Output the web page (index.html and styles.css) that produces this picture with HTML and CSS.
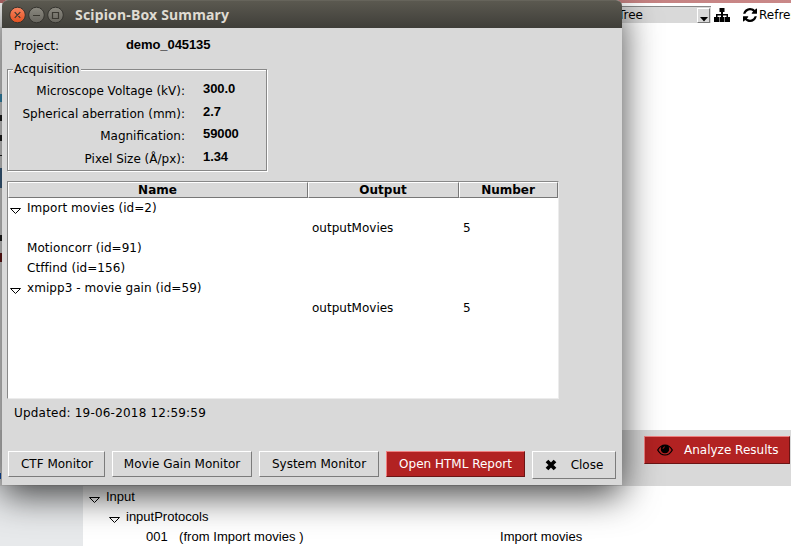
FILE: index.html
```html
<!DOCTYPE html>
<html lang="en">
<head>
<meta charset="utf-8">
<title>Scipion-Box Summary</title>
<link rel="stylesheet" href="styles.css">
</head>
<body>
<main class="app">
  <div class="app-top"></div>
  <header class="toolbar">
    <div class="combo"><span>Tree</span><i class="combo-btn"><svg width="8" height="5"><path d="M0 0h8L4 4.500z"/></svg></i></div>
    <svg class="ic-tree" width="16" height="14" viewBox="0 0 16 14"><path d="M5.500 0h5v4H9v2h5v3h2v5h-5V9h1.500V7.500H9V9h1.500v5h-5V9H7V7.500H3.500V9H5v5H0V9h2V6h5V4H5.500z"/></svg>
    <svg class="ic-refresh" width="14" height="14" viewBox="0 0 1536 1536"><path d="M1511 928q0 5-1 7-64 268-268 434.500T764 1536q-146 0-282.500-55T238 1324l-129 129q-19 19-45 19t-45-19-19-45V960q0-26 19-45t45-19h448q26 0 45 19t19 45-19 45l-137 137q71 66 161 102t187 36q134 0 250-65t186-179q11-17 53-117 8-23 30-23h192q13 0 22.500 9.500t9.500 22.500zM1536 128v448q0 26-19 45t-45 19h-448q-26 0-45-19t-19-45 19-45l138-138Q969 256 768 256q-134 0-250 65T332 500q-11 17-53 117-8 23-30 23H50q-13 0-22.500-9.500T18 608v-7q65-268 270-434.500T768 0q146 0 284 55.500T1297 212l130-129q19-19 45-19t45 19 19 45z"/></svg>
    <span class="refresh">Refresh</span>
  </header>
  <section class="canvas"></section>
  <div class="actions">
    <button class="btn red analyze"><svg width="16" height="12" viewBox="0 0 16 12"><path fill-rule="evenodd" d="M0 6Q3 .4 8 .4T16 6Q13 11.600 8 11.600T0 6zM1.400 6Q4 10.500 8 10.500T14.600 6Q13.400 3.600 11.300 2.400Q12.200 3.500 12.200 5A4.200 4.200 0 0 1 3.800 5Q3.800 3.500 4.700 2.400Q2.600 3.600 1.400 6z"/><circle cx="8" cy="5" r="3.900"/><path d="M6 5Q6 3 8 2.800" fill="none" stroke="#b22222" stroke-width=".8"/></svg><span>Analyze Results</span></button>
  </div>
  <section class="details">
    <aside class="side"></aside>
    <div class="params">
      <div class="p-row"><svg class="tri" width="11" height="7"><path d="M.5 .5h10l-5 5z"/></svg><span>Input</span></div>
      <div class="p-row p-child"><svg class="tri" width="11" height="7"><path d="M.5 .5h10l-5 5z"/></svg><span>inputProtocols</span></div>
      <div class="p-row p-leaf"><span class="idx">001</span><span class="from">(from Import movies )</span><span>Import movies</span></div>
    </div>
  </section>
</main>

<div class="window">
  <header class="titlebar">
    <svg width="62" height="18" viewBox="0 0 62 18">
      <defs><linearGradient id="o" x2="0" y2="1"><stop stop-color="#f78460"/><stop offset="1" stop-color="#e2501f"/></linearGradient><linearGradient id="g" x2="0" y2="1"><stop stop-color="#8b8980"/><stop offset="1" stop-color="#67655e"/></linearGradient></defs>
      <g stroke="#34332e"><circle cx="9.500" cy="9" r="7.800" fill="url(#o)"/><circle cx="28.500" cy="9" r="7.800" fill="url(#g)"/><circle cx="47.500" cy="9" r="7.800" fill="url(#g)"/></g>
      <path d="M6.700 6.200l5.600 5.600m0-5.600l-5.600 5.600M25 9.500h7M44.500 6.500h6v6h-6z" fill="none" stroke="#3a3831" stroke-width="1.200"/>
    </svg>
    <h1>Scipion-Box Summary</h1>
  </header>
  <div class="project"><span>Project:</span><b>demo_045135</b></div>
  <fieldset class="acq">
    <legend>Acquisition</legend>
    <div class="field"><span>Microscope Voltage (kV):</span><b>300.0</b></div>
    <div class="field"><span>Spherical aberration (mm):</span><b>2.7</b></div>
    <div class="field"><span>Magnification:</span><b>59000</b></div>
    <div class="field"><span>Pixel Size (Å/px):</span><b>1.34</b></div>
  </fieldset>
  <div class="tree">
    <div class="row head"><span>Name</span><span>Output</span><span>Number</span></div>
    <div class="row"><span class="name"><svg class="tri" width="11" height="7"><path d="M.5 .5h10l-5 5z"/></svg>Import movies (id=2)</span></div>
    <div class="row"><span></span><span>outputMovies</span><span>5</span></div>
    <div class="row"><span class="name plain">Motioncorr (id=91)</span></div>
    <div class="row"><span class="name plain">Ctffind (id=156)</span></div>
    <div class="row"><span class="name"><svg class="tri" width="11" height="7"><path d="M.5 .5h10l-5 5z"/></svg>xmipp3 - movie gain (id=59)</span></div>
    <div class="row"><span></span><span>outputMovies</span><span>5</span></div>
  </div>
  <p class="updated">Updated: 19-06-2018 12:59:59</p>
  <div class="buttons">
    <button class="btn ctf">CTF Monitor</button>
    <button class="btn gain">Movie Gain Monitor</button>
    <button class="btn sys">System Monitor</button>
    <button class="btn red report">Open HTML Report</button>
    <button class="btn close"><svg width="12" height="12" viewBox="0 0 12 12"><path d="M2 2l8 8M10 2l-8 8" stroke="#000" stroke-width="3.800"/></svg><span>Close</span></button>
  </div>
</div>
</body>
</html>
```
FILE: styles.css
```css
* { box-sizing: border-box; }
body {
  margin: 0;
  width: 791px;
  height: 546px;
  overflow: hidden;
  position: relative;
  background: #fff;
  color: #000;
  font: 12px/20px "DejaVu Sans", sans-serif;
}
span, b, h1, legend, button, p { white-space: nowrap; }
svg { display: block; flex: none; }

.app { display: flex; flex-direction: column; height: 546px; }
.app-top { height: 3px; background: linear-gradient(90deg, #b36868, #c98888); flex: none; }
.toolbar { display: flex; height: 24px; padding: 3px 0 0 600px; flex: none; }
.combo {
  width: 111px;
  height: 17px;
  flex: none;
  display: flex;
  justify-content: space-between;
  padding-left: 18px;
  background: #d9d9d9;
  border-top: 1px solid #888;
  line-height: 16px;
}
.combo-btn {
  width: 13px;
  height: 15px;
  margin-top: 1px;
  margin-right: 1px;
  padding: 8px 0 0 2px;
  border: 1px solid;
  border-color: #fff #777 #777 #fff;
}
.ic-tree { margin: 2px 0 0 3px; }
.ic-refresh { margin: 2px 2px 0 13px; }
.refresh { line-height: 18px; }
/* The left sliver shows the edge of the protocol tree behind the window. */
.canvas {
  height: 403px;
  flex: none;
  background:
    linear-gradient(#3d9cc8, #3d9cc8) 0 67px / 2px 8px no-repeat,
    linear-gradient(#222, #222) 0 88px / 2px 6px no-repeat,
    linear-gradient(#222, #222) 0 108px / 2px 6px no-repeat,
    linear-gradient(#222, #222) 0 128px / 2px 1px no-repeat,
    linear-gradient(#3f6890, #3f6890) 0 141px / 2px 20px no-repeat,
    linear-gradient(#222, #222) 0 208px / 2px 6px no-repeat,
    linear-gradient(#701818, #701818) 0 226px / 2px 9px no-repeat,
    linear-gradient(#e8e8e8, #e8e8e8) 0 0 / 2px 100% no-repeat,
    #fff;
}
.actions {
  height: 56px;
  flex: none;
  padding: 6px 0 0 644px;
  background: linear-gradient(#1050b0, #1050b0) 0 43px / 1px 6px no-repeat #d9d9d9;
}
.details { display: flex; flex: 1; }
.side { width: 83px; background: #e7e9eb; }
.params { flex: 1; font: 13px/20px "Liberation Sans", sans-serif; padding-top: 1px; }
.p-row { display: flex; height: 20px; padding-left: 6px; }
.p-row .tri { margin: 10px 6px 0 0; }
.p-child { padding-left: 26px; }
.p-leaf { padding-left: 63px; letter-spacing: .05px; }
.idx { width: 33px; }
.from { width: 321px; }
.tri { fill: #fff; stroke: #000; stroke-width: 1; }

.window {
  position: absolute;
  left: 2px;
  top: 0;
  width: 620px;
  height: 485px;
  display: flex;
  flex-direction: column;
  background: #d9d9d9;
  border-radius: 6px 6px 0 0;
  box-shadow: 0 10px 36px rgba(0, 0, 0, .74);
}
.titlebar {
  height: 28px;
  flex: none;
  display: flex;
  align-items: center;
  gap: 5px;
  padding-left: 6px;
  border-radius: 6px 6px 0 0;
  background: linear-gradient(#5b5950, #3f3e39);
  border-top: 1px solid #66645b;
}
.titlebar h1 { margin: 0; color: #dfdbd2; font: bold 14px/26px "Noto Sans", sans-serif; letter-spacing: .18px; padding-top: 1px; }
.project { display: flex; height: 36px; padding: 9px 0 0 12px; }
.project span { width: 112px; line-height: 19px; }
b { font: bold 13px/16px "Liberation Sans", sans-serif; letter-spacing: -.08px; }
.acq {
  margin: 0 0 0 5px;
  width: 260px;
  height: 107px;
  padding: 0;
  border: 1px solid #888;
  box-shadow: inset 1px 1px #fff, 1px 1px #fff;
}
.acq legend { padding: 0 1px; margin: 0 0 5px 5px; height: 10px; line-height: 10px; background: #d9d9d9; }
.field { display: flex; height: 22.700px; gap: 18px; }
.field span { width: 177px; text-align: right; line-height: 24px; }
.field b { line-height: 20px; }
.tree {
  margin: 10px 0 0 5px;
  width: 552px;
  height: 218px;
  background: #fff;
  border: 1px solid;
  border-color: #888 #ececec #ececec #888;
}
.row { display: grid; grid-template-columns: 300px 151px 99px; height: 20px; line-height: 21px; }
.row > span { padding-left: 4px; }
.head { height: 16px; font-weight: bold; line-height: 14px; }
.head > span { padding: 0 1px 0 0; text-align: center; background: #d9d9d9; border: 1px solid; border-color: #fff #777 #777 #fff; }
.row > .name { display: flex; padding-left: 2px; letter-spacing: .06px; }
.row > .plain { padding-left: 19px; }
.name .tri { margin: 10px 6px 0 0; }
.updated { margin: 4px 0 0 12px; letter-spacing: .2px; }
.buttons { display: flex; align-items: flex-start; margin: 28px 0 0 6px; }
.btn {
  display: flex;
  align-items: center;
  justify-content: center;
  height: 26px;
  padding: 0;
  margin: 0;
  border: 1px solid;
  border-color: #fff #7b7b7b #7b7b7b #fff;
  background: #d9d9d9;
  color: #000;
  font: 12px/20px "DejaVu Sans", sans-serif;
}
.red { background: #b22222; color: #fff; border-color: #f08080 #6b1414 #6b1414 #f08080; }
.analyze { width: 146px; height: 28px; padding: 0 0 0 12px; justify-content: flex-start; gap: 11px; }
.ctf { width: 97px; margin-right: 7px; padding-left: 1px; }
.gain { width: 140px; margin-right: 7px; }
.sys { width: 120px; margin-right: 7px; }
.report { width: 139px; margin-right: 7px; }
.close { width: 84px; height: 28px; gap: 14px; }
```
